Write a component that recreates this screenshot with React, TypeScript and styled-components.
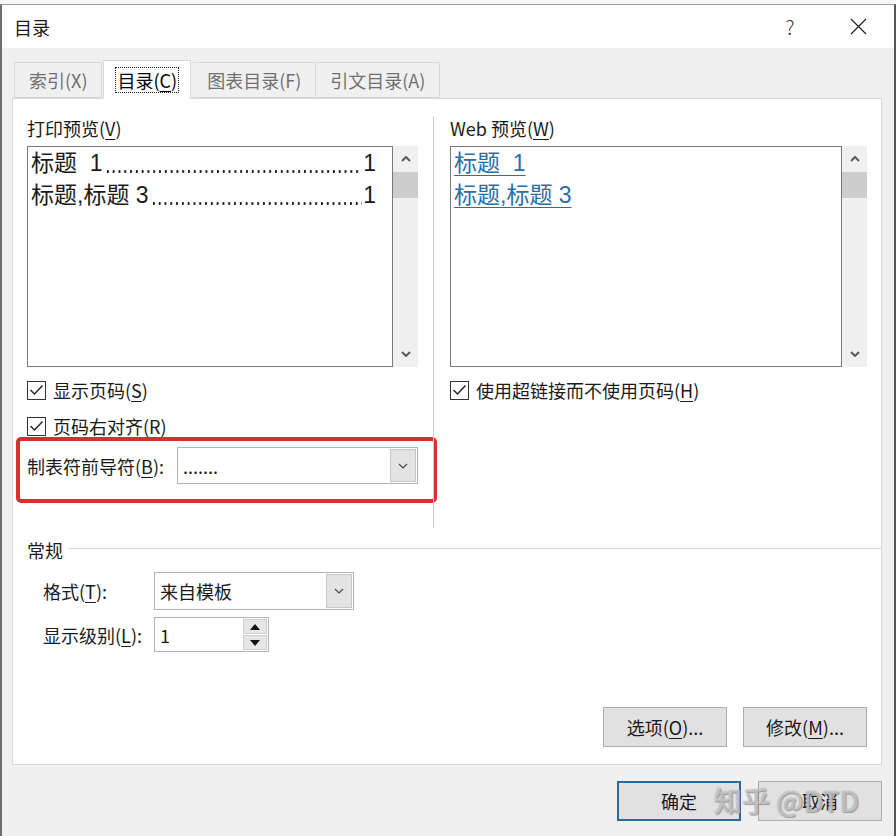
import React from "react";
import styled, { createGlobalStyle } from "styled-components";

const GlobalStyle = createGlobalStyle`
  html, body {
    margin: 0;
    padding: 0;
    background: #fafafa;
  }
  body {
    font-family: "Noto Sans CJK SC", "Noto Sans", sans-serif;
    color: #1a1a1a;
  }
  * {
    box-sizing: border-box;
  }
`;

const Screen = styled.div`
  position: relative;
  width: 896px;
  height: 836px;
  overflow: hidden;
  padding-top: 4px;
  background: #f7f7f7;
`;

const Dialog = styled.div`
  width: 896px;
  height: 832px;
  display: flex;
  flex-direction: column;
  background: #f0f0f0;
  border-top: 1px solid #9a9a9a;
  border-left: 2px solid #6e6e6e;
  border-right: 2px solid #555555;
`;

const TitleBar = styled.div`
  height: 43px;
  display: flex;
  align-items: center;
  padding-left: 12px;
  padding-right: 13px;
  background: #ffffff;
  font-size: 18px;
`;

const TitleControls = styled.div`
  margin-left: auto;
  display: flex;
  align-items: center;
`;

const HelpButton = styled.div`
  width: 30px;
  text-align: center;
  font-size: 20px;
  font-weight: 300;
  color: #333;
  margin-right: 30px;
`;

const CloseButton = styled.div`
  width: 46px;
  display: flex;
  justify-content: center;
`;

const Body = styled.div`
  flex: 1;
  display: flex;
  flex-direction: column;
  padding: 0 12px 0 10px;
`;

const TabRow = styled.div`
  display: flex;
  align-items: flex-end;
  height: 38px;
  margin-top: 12px;
  padding-left: 2px;
  position: relative;
  z-index: 1;
`;

const Tab = styled.div<{ $active?: boolean }>`
  height: ${({ $active }) => ($active ? "39px" : "36px")};
  margin-bottom: ${({ $active }) => ($active ? "-1px" : "0")};
  padding: 0 ${({ $active }) => ($active ? "13px" : "14px")};
  margin-left: ${({ $active }) => ($active ? "1px" : "0")};
  margin-right: ${({ $active }) => ($active ? "2px" : "0")};
  display: flex;
  align-items: center;
  font-size: 18px;
  color: ${({ $active }) => ($active ? "#000" : "#707070")};
  background: ${({ $active }) => ($active ? "#ffffff" : "#f0f0f0")};
  border: 1px solid #d9d9d9;
  border-bottom: ${({ $active }) => ($active ? "none" : "1px solid #d9d9d9")};
  border-left: ${({ $active }) => ($active ? "1px solid #d9d9d9" : "none")};
  &:first-child {
    border-left: 1px solid #d9d9d9;
  }
`;

const FocusText = styled.span`
  outline: 1px dotted #222;
  outline-offset: 1px;
  line-height: 22px;
`;

const Panel = styled.div`
  height: 667px;
  display: flex;
  flex-direction: column;
  background: #ffffff;
  border: 1px solid #d9d9d9;
`;

const TopSection = styled.div`
  display: flex;
  height: 429px;
`;

const Column = styled.div<{ $left?: boolean }>`
  width: ${({ $left }) => ($left ? "420px" : "auto")};
  flex: ${({ $left }) => ($left ? "none" : "1")};
  display: flex;
  flex-direction: column;
  padding: ${({ $left }) => ($left ? "19px 15px 0 14px" : "19px 14px 0 16px")};
`;

const Separator = styled.div`
  width: 1px;
  height: 412px;
  margin-top: 17px;
  background: #cfcfcf;
`;

const FieldLabel = styled.div`
  font-size: 18px;
  line-height: 20px;
  margin-bottom: 8px;
  white-space: nowrap;
`;

const Key = styled.span`
  text-decoration: underline;
  text-underline-offset: 3px;
`;

const PreviewArea = styled.div`
  display: flex;
  height: 221px;
`;

const ListBox = styled.div`
  flex: 1;
  border: 1px solid #7a7a7a;
  background: #ffffff;
  padding: 0 16px 0 3px;
  font-family: "Liberation Sans", "Noto Sans CJK SC", sans-serif;
  font-size: 23px;
  line-height: 32px;
  overflow: hidden;
`;

const TocLine = styled.div`
  display: flex;
  white-space: nowrap;
`;

/* dotted tab leader, drawn as a repeating dot pattern sitting on the baseline */
const Leader = styled.span`
  flex: 1;
  height: 32px;
  margin: 0 1px 0 2px;
  background-image: radial-gradient(circle 1.2px at 2.8px 24.5px, #1a1a1a 95%, transparent 100%);
  background-size: 5.8px 32px;
  background-repeat: repeat-x;
`;

const WebLink = styled.div`
  color: #2a6ea6;
  text-decoration: underline;
  text-underline-offset: 4px;
  text-decoration-thickness: 1px;
  white-space: pre;
  width: fit-content;
`;

const ScrollBar = styled.div`
  width: 25px;
  display: flex;
  flex-direction: column;
  background: #f0f0f0;
`;

const ScrollArrow = styled.div`
  height: 26px;
  display: flex;
  align-items: center;
  justify-content: center;
`;

const ScrollThumb = styled.div`
  height: 26px;
  background: #cdcdcd;
`;

const ScrollTrack = styled.div`
  flex: 1;
`;

const CheckRow = styled.div<{ $gap: number }>`
  height: 30px;
  margin-top: ${({ $gap }) => $gap}px;
  display: flex;
  align-items: center;
  gap: 7px;
  font-size: 18px;
  white-space: nowrap;
`;

const CheckBox = styled.div`
  width: 19px;
  height: 19px;
  border: 1px solid #333;
  background: #fff;
  display: flex;
  align-items: center;
  justify-content: center;
`;

const Highlight = styled.div`
  width: 421px;
  height: 66px;
  margin-left: -11px;
  margin-top: -4px;
  padding: 6px 0 0 7px;
  border: 4px solid #d8302a;
  border-radius: 5px;
`;

const FormRow = styled.div<{ $labelWidth: number; $gap?: number }>`
  display: flex;
  align-items: center;
  margin-top: ${({ $gap }) => $gap ?? 0}px;
  font-size: 18px;
  & > label {
    width: ${({ $labelWidth }) => $labelWidth}px;
    white-space: nowrap;
  }
`;

const Combo = styled.div<{ $width: number; $height: number }>`
  width: ${({ $width }) => $width}px;
  height: ${({ $height }) => $height}px;
  display: flex;
  align-items: stretch;
  border: 1px solid #b4b4b4;
  background: #fff;
`;

const ComboValue = styled.div`
  flex: 1;
  display: flex;
  align-items: center;
  padding-left: 5px;
  font-size: 18px;
`;

const DropButton = styled.div`
  width: 26px;
  margin: 1px;
  display: flex;
  align-items: center;
  justify-content: center;
  background: #e3e3e3;
  border: 1px solid #c6c6c6;
`;

const SpinButtons = styled.div`
  width: 24px;
  margin: 1px;
  display: flex;
  flex-direction: column;
  gap: 1px;
`;

const SpinButton = styled.div`
  flex: 1;
  display: flex;
  align-items: center;
  justify-content: center;
  background: #e6e6e6;
  border: 1px solid #cfcfcf;
`;

const GroupHeader = styled.div`
  display: flex;
  align-items: center;
  gap: 5px;
  margin-top: 12px;
  padding-left: 14px;
  font-size: 18px;
  line-height: 20px;
`;

const GroupLine = styled.div`
  flex: 1;
  height: 1px;
  margin-top: -3px;
  background: #dcdcdc;
`;

const GroupBody = styled.div`
  padding-left: 30px;
`;

const ButtonRow = styled.div<{ $panel?: boolean }>`
  display: flex;
  justify-content: flex-end;
  gap: ${({ $panel }) => ($panel ? "16px" : "17px")};
  margin-top: ${({ $panel }) => ($panel ? "auto" : "16px")};
  padding-right: ${({ $panel }) => ($panel ? "14px" : "0")};
  padding-bottom: ${({ $panel }) => ($panel ? "17px" : "0")};
`;

const Button = styled.div<{ $default?: boolean }>`
  width: 124px;
  height: 40px;
  display: flex;
  align-items: center;
  justify-content: center;
  font-size: 18px;
  background: #e1e1e1;
  border: ${({ $default }) => ($default ? "2px solid #2a6b9e" : "1px solid #adadad")};
`;

const Watermark = styled.div`
  position: absolute;
  left: 714px;
  top: 780px;
  font-size: 28px;
  font-weight: 500;
  color: rgba(255, 255, 255, 0.55);
  text-shadow: 0 0 1px rgba(90, 90, 90, 0.7), 1px 1px 1px rgba(120, 120, 120, 0.6);
  white-space: pre;
  pointer-events: none;
`;

const Chevron = ({ up, size = 10, color = "#5a5a5a", stroke = 2 }: { up?: boolean; size?: number; color?: string; stroke?: number }) => (
  <svg width={size} height={size * 0.6} viewBox="0 0 10 6">
    <path
      d={up ? "M1 5 L5 1 L9 5" : "M1 1 L5 5 L9 1"}
      fill="none"
      stroke={color}
      strokeWidth={stroke}
    />
  </svg>
);

const Triangle = ({ up }: { up?: boolean }) => (
  <svg width="10" height="6" viewBox="0 0 10 6">
    <path d={up ? "M0 6 L5 0 L10 6 Z" : "M0 0 L5 6 L10 0 Z"} fill="#111" />
  </svg>
);

const Check = () => (
  <svg width="15" height="12" viewBox="0 0 15 12">
    <path d="M1.5 6 L5.5 10 L13.5 1.5" fill="none" stroke="#222" strokeWidth="1.4" />
  </svg>
);

const Scroll = () => (
  <ScrollBar>
    <ScrollArrow>
      <Chevron up />
    </ScrollArrow>
    <ScrollThumb />
    <ScrollTrack />
    <ScrollArrow>
      <Chevron />
    </ScrollArrow>
  </ScrollBar>
);

const CheckItem = ({ gap, children }: { gap: number; children: React.ReactNode }) => (
  <CheckRow $gap={gap}>
    <CheckBox>
      <Check />
    </CheckBox>
    <span>{children}</span>
  </CheckRow>
);

const App: React.FC = () => {
  return (
    <Screen>
      <GlobalStyle />
      <Dialog>
        <TitleBar>
          目录
          <TitleControls>
            <HelpButton>?</HelpButton>
            <CloseButton>
              <svg width="17" height="17" viewBox="0 0 17 17">
                <path d="M1 1 L16 16 M16 1 L1 16" stroke="#222" strokeWidth="1.2" />
              </svg>
            </CloseButton>
          </TitleControls>
        </TitleBar>

        <Body>
          <TabRow>
            <Tab>索引(X)</Tab>
            <Tab $active>
              <FocusText>
                目录(<Key>C</Key>)
              </FocusText>
            </Tab>
            <Tab>图表目录(F)</Tab>
            <Tab>引文目录(A)</Tab>
          </TabRow>

          <Panel>
            <TopSection>
              <Column $left>
                <FieldLabel>
                  打印预览(<Key>V</Key>)
                </FieldLabel>
                <PreviewArea>
                  <ListBox>
                    <TocLine>
                      <span>标题&nbsp;&nbsp;1</span>
                      <Leader />
                      <span>1</span>
                    </TocLine>
                    <TocLine>
                      <span>标题,标题 3</span>
                      <Leader />
                      <span>1</span>
                    </TocLine>
                  </ListBox>
                  <Scroll />
                </PreviewArea>
                <CheckItem gap={8}>
                  显示页码(<Key>S</Key>)
                </CheckItem>
                <CheckItem gap={6}>
                  页码右对齐(<Key>R</Key>)
                </CheckItem>
                <Highlight>
                  <FormRow $labelWidth={150}>
                    <label>
                      制表符前导符(<Key>B</Key>):
                    </label>
                    <Combo $width={241} $height={37}>
                      <ComboValue>.......</ComboValue>
                      <DropButton>
                        <Chevron size={10} stroke={1.1} color="#444" />
                      </DropButton>
                    </Combo>
                  </FormRow>
                </Highlight>
              </Column>

              <Separator />

              <Column>
                <FieldLabel>
                  Web 预览(<Key>W</Key>)
                </FieldLabel>
                <PreviewArea>
                  <ListBox>
                    <WebLink>标题  1</WebLink>
                    <WebLink>标题,标题 3</WebLink>
                  </ListBox>
                  <Scroll />
                </PreviewArea>
                <CheckItem gap={8}>
                  使用超链接而不使用页码(<Key>H</Key>)
                </CheckItem>
              </Column>
            </TopSection>

            <GroupHeader>
              常规
              <GroupLine />
            </GroupHeader>
            <GroupBody>
              <FormRow $labelWidth={111} $gap={12}>
                <label>
                  格式(<Key>T</Key>):
                </label>
                <Combo $width={200} $height={38}>
                  <ComboValue>来自模板</ComboValue>
                  <DropButton>
                    <Chevron size={10} stroke={1.1} color="#444" />
                  </DropButton>
                </Combo>
              </FormRow>
              <FormRow $labelWidth={111} $gap={7}>
                <label>
                  显示级别(<Key>L</Key>):
                </label>
                <Combo $width={115} $height={35}>
                  <ComboValue>1</ComboValue>
                  <SpinButtons>
                    <SpinButton>
                      <Triangle up />
                    </SpinButton>
                    <SpinButton>
                      <Triangle />
                    </SpinButton>
                  </SpinButtons>
                </Combo>
              </FormRow>
            </GroupBody>

            <ButtonRow $panel>
              <Button>
                选项(<Key>O</Key>)...
              </Button>
              <Button>
                修改(<Key>M</Key>)...
              </Button>
            </ButtonRow>
          </Panel>

          <ButtonRow>
            <Button $default>确定</Button>
            <Button>取消</Button>
          </ButtonRow>
        </Body>
      </Dialog>
      <Watermark>知乎 @DTD</Watermark>
    </Screen>
  );
};

export default App;
